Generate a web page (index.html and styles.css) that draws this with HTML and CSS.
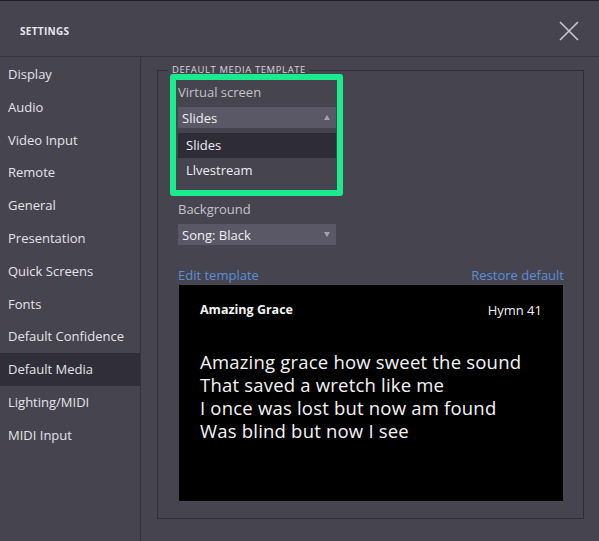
FILE: index.html
```html
<!DOCTYPE html>
<html>
<head>
<meta charset="utf-8">
<link rel="stylesheet" href="styles.css">
</head>
<body>
<div class="app">
  <header class="header">
    <span class="title">SETTINGS</span>
    <button class="close" aria-label="Close">
      <svg width="20" height="20" viewBox="0 0 20 20"><path d="M1 1 L19 19 M19 1 L1 19" stroke="#c9c8ce" stroke-width="1.6" fill="none"/></svg>
    </button>
  </header>
  <div class="main">
    <nav class="sidebar">
      <div class="nav-item">Display</div>
      <div class="nav-item">Audio</div>
      <div class="nav-item">Video Input</div>
      <div class="nav-item">Remote</div>
      <div class="nav-item">General</div>
      <div class="nav-item">Presentation</div>
      <div class="nav-item">Quick Screens</div>
      <div class="nav-item">Fonts</div>
      <div class="nav-item">Default Confidence</div>
      <div class="nav-item active">Default Media</div>
      <div class="nav-item">Lighting/MIDI</div>
      <div class="nav-item">MIDI Input</div>
    </nav>
    <section class="content">
      <fieldset class="group">
        <legend class="legend">DEFAULT MEDIA TEMPLATE</legend>
        <div class="field field-virtual">
          <div class="label">Virtual screen</div>
          <div class="select open">
            <span>Slides</span>
            <span class="arrow up"></span>
          </div>
          <ul class="dropdown">
            <li class="option selected">Slides</li>
            <li class="option">Llvestream</li>
          </ul>
          <div class="highlight"></div>
        </div>
        <div class="field field-bg">
          <div class="label">Background</div>
          <div class="select">
            <span>Song: Black</span>
            <span class="arrow down"></span>
          </div>
        </div>
        <div class="links">
          <a class="link">Edit template</a>
          <a class="link">Restore default</a>
        </div>
        <div class="preview">
          <div class="preview-head">
            <span class="song-title">Amazing Grace</span>
            <span class="song-num">Hymn 41</span>
          </div>
          <div class="lyrics">
            <div>Amazing grace how sweet the sound</div>
            <div>That saved a wretch like me</div>
            <div>I once was lost but now am found</div>
            <div>Was blind but now I see</div>
          </div>
        </div>
      </fieldset>
    </section>
  </div>
</div>
</body>
</html>
```

FILE: styles.css
```css
* { box-sizing: border-box; }
html, body { margin: 0; padding: 0; }
body {
  background: #46444f;
  font-family: "Open Sans", "Noto Sans", sans-serif;
  color: #e6e5ea;
  width: 599px;
  height: 541px;
  overflow: hidden;
}
.app {
  border-top: 1px solid #1d1c23;
  height: 541px;
  display: flex;
  flex-direction: column;
}
.header {
  height: 56px;
  border-bottom: 1px solid #34333c;
  display: flex;
  align-items: center;
  justify-content: space-between;
  padding: 0 20px 0 20px;
  flex: none;
}
.title {
  font-size: 10px;
  font-weight: 700;
  letter-spacing: 0.3px;
  color: #e8e7ec;
  margin-top: 4px;
}
.close {
  background: none;
  border: 0;
  padding: 0;
  width: 20px;
  height: 20px;
  margin-top: 5px;
  display: block;
}
.main {
  flex: 1;
  display: flex;
}
.sidebar {
  width: 141px;
  border-right: 1px solid #35343d;
  flex: none;
  padding-top: 1px;
}
.nav-item {
  height: 32.8px;
  line-height: 32.8px;
  padding-left: 8px;
  font-size: 13px;
  color: #e4e3e8;
  white-space: nowrap;
}
.nav-item.active {
  background: #302f39;
}
.content {
  flex: 1;
  padding: 7px 15px 0 16px;
}
.group {
  margin: 0;
  border: 1px solid #2f2e37;
  padding: 0 20px 0 20px;
  height: 455px;
  width: 427px;
  min-width: 0;
}
.legend {
  font-size: 9.5px;
  letter-spacing: 0.6px;
  color: #d5d4da;
  padding: 0 4px;
  margin-left: -10px;
  line-height: 12px;
}
.field {
  position: relative;
  width: 158px;
}
.field-virtual {
  margin-top: 6px;
  height: 117px;
}
.label {
  font-size: 13px;
  color: #c4c3ca;
  line-height: 20px;
}
.select {
  margin-top: 5px;
  height: 21px;
  background: #5a5866;
  display: flex;
  align-items: center;
  justify-content: space-between;
  padding: 0 6px 0 4px;
  font-size: 13px;
  color: #f0eff3;
}
.arrow {
  width: 0;
  height: 0;
  border-left: 3.5px solid transparent;
  border-right: 3.5px solid transparent;
}
.arrow.up { border-bottom: 5px solid #a3a2ab; }
.arrow.down { border-top: 5px solid #a3a2ab; }
.dropdown {
  position: absolute;
  left: 0;
  top: 51px;
  width: 158px;
  margin: 0;
  padding: 0 0 4px 0;
  list-style: none;
  background: #46444f;
}
.option {
  height: 25px;
  line-height: 25px;
  padding-left: 8px;
  font-size: 13px;
  color: #eeedf2;
}
.option.selected { background: #2e2d37; }
.highlight {
  position: absolute;
  left: -8px;
  top: -8px;
  width: 173px;
  height: 122px;
  border: 6px solid #1ceb8d;
  border-radius: 3px;
}
.field-bg .select {
  margin-top: 5px;
}
.links {
  display: flex;
  justify-content: space-between;
  margin-top: 20px;
  width: 386px;
  font-size: 13px;
  line-height: 20px;
}
.link {
  color: #5b8fd9;
}
.preview {
  margin-left: 1px;
  width: 384px;
  height: 216px;
  background: #000;
  padding: 16px 21px 0 21px;
}
.preview-head {
  display: flex;
  justify-content: space-between;
  font-size: 12.5px;
  color: #f2f2f2;
}
.song-title { font-weight: 700; }
.song-num { font-size: 13px; }
.lyrics {
  margin-top: 31px;
  font-size: 18.5px;
  line-height: 23px;
  letter-spacing: 0.2px;
  color: #f4f4f4;
}
```
